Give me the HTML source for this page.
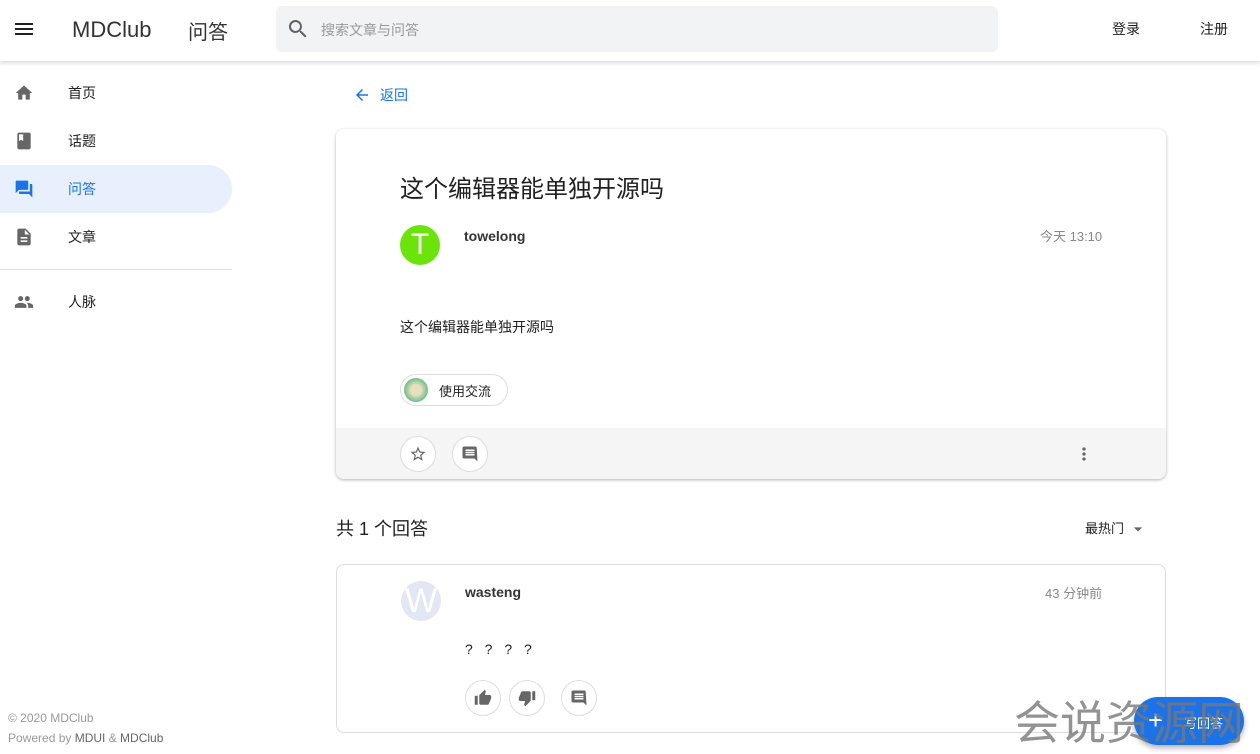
<!DOCTYPE html>
<html><head><meta charset="utf-8"><style>
*{box-sizing:border-box;margin:0;padding:0}
body{width:1260px;height:754px;overflow:hidden;background:#fff;font-family:"Liberation Sans","Noto Sans CJK SC",sans-serif;color:#212121;position:relative}
.hdr{position:absolute;left:0;top:0;width:1260px;height:61px;background:#fff;box-shadow:0 2px 4px rgba(0,0,0,.15);z-index:5}
.abs{position:absolute}
.nav{position:absolute;left:0;height:48px;width:232px;font-size:14px}
.nav span{position:absolute;left:68px;top:14px}
.nav svg{position:absolute;left:14px;top:14px}
.card{position:absolute;left:336px;width:830px;background:#fff;border-radius:8px}
.cb{position:absolute;width:36px;height:36px;border:1px solid #ddd;border-radius:50%;background:#fff}
.cb svg{position:absolute;left:8px;top:8px}
</style></head><body>
<div class="hdr">
<svg class="abs" style="left:12px;top:17px" width="24" height="24" viewBox="0 0 24 24"><path d="M3 6h18v2H3zm0 5h18v2H3zm0 5h18v2H3z" fill="#212121"/></svg>
<div class="abs" style="left:72px;top:17px;font-size:22px;color:#333">MDClub</div>
<div class="abs" style="left:188px;top:16px;font-size:20px;color:#333">问答</div>
<div class="abs" style="left:276px;top:6px;width:722px;height:46px;background:#f1f3f4;border-radius:6px"></div>
<svg class="abs" style="left:286px;top:17px" width="24" height="24" viewBox="0 0 24 24"><path d="M15.5 14h-.8l-.3-.3A6.5 6.5 0 1 0 9.5 16a6.5 6.5 0 0 0 4.2-1.6l.3.3v.8l5 5 1.5-1.5-5-5zm-6 0a4.5 4.5 0 1 1 0-9 4.5 4.5 0 0 1 0 9z" fill="#5f6368"/></svg>
<div class="abs" style="left:321px;top:20px;font-size:14px;color:#999">搜索文章与问答</div>
<div class="abs" style="left:1112px;top:19px;font-size:14px">登录</div>
<div class="abs" style="left:1200px;top:19px;font-size:14px">注册</div>
</div>
<div class="nav" style="top:69px"><svg width="20" height="20" viewBox="0 0 24 24"><path d="M10 20v-6h4v6h5v-8h3L12 3 2 12h3v8z" fill="#666"/></svg><span>首页</span></div>
<div class="nav" style="top:117px"><svg width="20" height="20" viewBox="0 0 24 24"><path d="M18 2H6c-1.1 0-2 .9-2 2v16c0 1.1.9 2 2 2h12c1.1 0 2-.9 2-2V4c0-1.1-.9-2-2-2zM6 4h5v8l-2.5-1.5L6 12V4z" fill="#666"/></svg><span>话题</span></div>
<div class="nav" style="top:165px;background:#e8f0fe;border-radius:0 24px 24px 0;color:#1a73e8"><svg width="20" height="20" viewBox="0 0 24 24"><path d="M21 6h-2v9H6v2c0 .6.4 1 1 1h11l4 4V7c0-.6-.4-1-1-1zm-4 6V3c0-.6-.4-1-1-1H3c-.6 0-1 .4-1 1v14l4-4h10c.6 0 1-.4 1-1z" fill="#1a73e8"/></svg><span>问答</span></div>
<div class="nav" style="top:213px"><svg width="20" height="20" viewBox="0 0 24 24"><path d="M14 2H6c-1.1 0-2 .9-2 2v16c0 1.1.9 2 2 2h12c1.1 0 2-.9 2-2V8l-6-6zm2 16H8v-2h8v2zm0-4H8v-2h8v2zm-3-5V3.5L18.5 9H13z" fill="#666"/></svg><span>文章</span></div>
<div class="abs" style="left:0;top:269px;width:232px;height:1px;background:#e0e0e0"></div>
<div class="nav" style="top:278px"><svg width="20" height="20" viewBox="0 0 24 24"><path d="M16 11c1.7 0 3-1.3 3-3s-1.3-3-3-3-3 1.3-3 3 1.3 3 3 3zm-8 0c1.7 0 3-1.3 3-3S9.7 5 8 5 5 6.3 5 8s1.3 3 3 3zm0 2c-2.3 0-7 1.2-7 3.5V19h14v-2.5C15 14.2 10.3 13 8 13zm8 0c-.3 0-.6 0-1 .1 1.2.8 2 2 2 3.4V19h6v-2.5c0-2.3-4.7-3.5-7-3.5z" fill="#666"/></svg><span>人脉</span></div>
<div class="abs" style="left:8px;top:711px;font-size:12px;color:#999">© 2020 MDClub</div>
<div class="abs" style="left:8px;top:731px;font-size:12px;color:#999">Powered by <span style="color:#666">MDUI</span> &amp; <span style="color:#666">MDClub</span></div>

<svg class="abs" style="left:353px;top:86px" width="18" height="18" viewBox="0 0 24 24"><path d="M20 11H7.8l5.6-5.6L12 4l-8 8 8 8 1.4-1.4L7.8 13H20z" fill="#1a73e8"/></svg>
<div class="abs" style="left:380px;top:85px;font-size:14px;color:#1a73e8">返回</div>

<div class="card" style="top:129px;height:350px;box-shadow:0 1px 3px rgba(0,0,0,.3);overflow:hidden">
<div class="abs" style="left:64px;top:40px;font-size:24px">这个编辑器能单独开源吗</div>
<div class="abs" style="left:64px;top:96px;width:40px;height:40px;border-radius:50%;background:#6be40c;color:#fff;font-size:30px;text-align:center;line-height:40px;font-weight:300">T</div>
<div class="abs" style="left:128px;top:99px;font-size:14px;font-weight:bold;color:#333">towelong</div>
<div class="abs" style="left:704px;top:97px;font-size:13px;color:#888">今天 13:10</div>
<div class="abs" style="left:64px;top:188px;font-size:14px">这个编辑器能单独开源吗</div>
<div class="abs" style="left:64px;top:245px;width:108px;height:32px;border:1px solid #ddd;border-radius:16px"><div class="abs" style="left:3px;top:3px;width:24px;height:24px;border-radius:50%;background:radial-gradient(circle,#e8e0c0 30%,#6bbf8a 70%)"></div><div class="abs" style="left:38px;top:6px;font-size:13px">使用交流</div></div>
<div class="abs" style="left:0;top:299px;width:830px;height:51px;background:#f5f5f5"></div>
<div class="cb" style="left:64px;top:307px"><svg width="18" height="18" viewBox="0 0 24 24"><path d="M22 9.2l-7.2-.6L12 2 9.2 8.6 2 9.2l5.5 4.8L5.8 21 12 17.3 18.2 21l-1.7-7zM12 15.4l-3.8 2.3 1-4.3-3.3-2.9 4.4-.4L12 6.1l1.7 4 4.4.4-3.3 2.9 1 4.3z" fill="#666"/></svg></div>
<div class="cb" style="left:116px;top:307px"><svg width="18" height="18" viewBox="0 0 24 24"><path d="M21 4c0-1.1-.9-2-2-2H4c-1.1 0-2 .9-2 2v12c0 1.1.9 2 2 2h14l4 4-1-18zM18 14H6v-2h12v2zm0-3H6V9h12v2zm0-3H6V6h12v2z" fill="#666"/></svg></div>
<svg class="abs" style="left:738px;top:315px" width="20" height="20" viewBox="0 0 24 24"><path d="M12 8a2 2 0 1 0 0-4 2 2 0 0 0 0 4zm0 2a2 2 0 1 0 0 4 2 2 0 0 0 0-4zm0 6a2 2 0 1 0 0 4 2 2 0 0 0 0-4z" fill="#666"/></svg>
</div>

<div class="abs" style="left:336px;top:515px;font-size:18px">共 1 个回答</div>
<div class="abs" style="left:1085px;top:518px;font-size:13px">最热门</div>
<svg class="abs" style="left:1128px;top:519px" width="20" height="20" viewBox="0 0 24 24"><path d="M7 10l5 5 5-5z" fill="#666"/></svg>

<div class="card" style="top:564px;height:169px;border:1px solid #ddd">
<div class="abs" style="left:64px;top:16px;width:40px;height:40px;border-radius:50%;background:#e3e6f3;color:#fff;font-size:34px;text-align:center;line-height:40px;font-weight:300">W</div>
<div class="abs" style="left:128px;top:19px;font-size:14px;font-weight:bold;color:#333">wasteng</div>
<div class="abs" style="left:708px;top:18px;font-size:13px;color:#888">43 分钟前</div>
<div class="abs" style="left:128px;top:76px;font-size:14px;letter-spacing:4px">? ? ? ?</div>
<div class="cb" style="left:128px;top:115px"><svg width="18" height="18" viewBox="0 0 24 24"><path d="M1 21h4V9H1v12zm22-11c0-1.1-.9-2-2-2h-6.3l1-4.6v-.3c0-.4-.2-.8-.4-1.1L14.2 1 7.6 7.6C7.2 7.9 7 8.4 7 9v10c0 1.1.9 2 2 2h9c.8 0 1.5-.5 1.8-1.2l3-7.1c.1-.2.1-.5.1-.7v-2z" fill="#666"/></svg></div>
<div class="cb" style="left:172px;top:115px"><svg width="18" height="18" viewBox="0 0 24 24"><path d="M15 3H6c-.8 0-1.5.5-1.8 1.2l-3 7.1c-.1.2-.2.5-.2.7v2c0 1.1.9 2 2 2h6.3l-1 4.6v.3c0 .4.2.8.4 1.1l1.1 1L16.4 16.4c.4-.4.6-.9.6-1.4V5c0-1.1-.9-2-2-2zm4 0v12h4V3h-4z" fill="#666"/></svg></div>
<div class="cb" style="left:224px;top:115px"><svg width="18" height="18" viewBox="0 0 24 24"><path d="M21 4c0-1.1-.9-2-2-2H4c-1.1 0-2 .9-2 2v12c0 1.1.9 2 2 2h14l4 4-1-18zM18 14H6v-2h12v2zm0-3H6V9h12v2zm0-3H6V6h12v2z" fill="#666"/></svg></div>
</div>

<div class="abs" style="left:1134px;top:697px;width:110px;height:48px;border-radius:24px;background:#1a73e8;box-shadow:0 3px 6px rgba(0,0,0,.3)"><div class="abs" style="left:14px;top:8px;color:#fff;font-size:26px">+</div><div class="abs" style="left:50px;top:16px;color:#fff;font-size:13px">写回答</div></div>
<div class="abs" style="left:1014px;top:692px;font-size:46px;color:rgba(120,120,120,.8);font-family:'Noto Sans CJK SC',sans-serif;line-height:56px">会说资源网</div>
</body></html>
